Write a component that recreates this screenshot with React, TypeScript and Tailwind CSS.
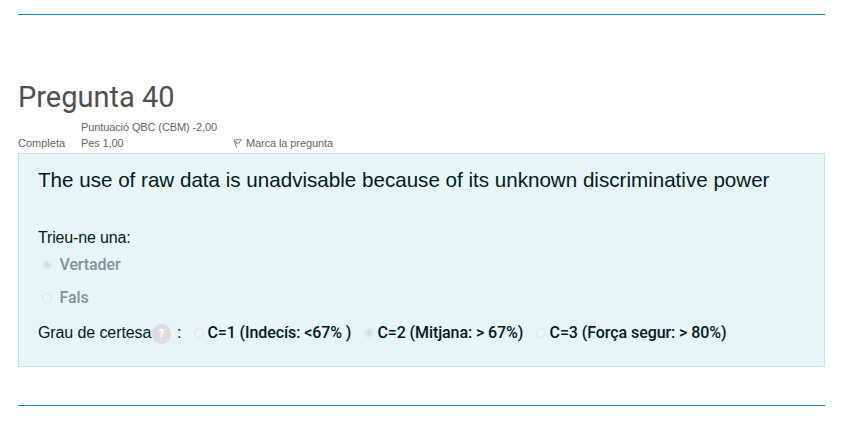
type ChoiceProps = { label: string; checked?: boolean; className: string };

function Radio({ checked }: { checked?: boolean }) {
  return (
    <span className="flex size-[10px] shrink-0 items-center justify-center rounded-full border border-[#dae4e4] bg-[#eaf5f5]">
      {checked && <span className="size-[6px] rounded-full bg-[#d5dddd]" />}
    </span>
  );
}

function Choice({ label, checked, className }: ChoiceProps) {
  return (
    <label className={`flex items-center font-['Roboto',sans-serif] font-medium whitespace-nowrap ${className}`}>
      <Radio checked={checked} />
      {label}
    </label>
  );
}

export default function App() {
  return (
    <main className="h-[437px] w-[855px] overflow-hidden bg-white pl-[18px] pr-[30px] pt-[14px] font-['Liberation_Sans',Arial,sans-serif]">
      <div className="h-px bg-[#1b81bc]" />
      <header className="mt-[62px] h-[76px] text-[11px] leading-4 text-[#666]">
        <h2 className="h-[42px] pt-[2px] font-['Roboto',sans-serif] text-[29px] leading-[36px] text-[#505050]">Pregunta 40</h2>
        <div className="flex h-[32px] items-end whitespace-nowrap">
          <span className="w-[63px]">Completa</span>
          <div className="w-[152px] tracking-[-0.11px]">
            <p>Puntuació QBC (CBM) -2,00</p>
            <p>Pes 1,00</p>
          </div>
          <span className="flex items-center gap-[3px] tracking-[-0.1px]">
            <svg className="mt-px h-[11px] w-[10px]" viewBox="0 0 10 11" fill="none" stroke="#777" strokeWidth="0.9">
              <path d="M1 1.8H8.6L6.6 3.6L6.6 5L3 5.5M1 1.8L3.6 10M2.2 3L3.8 5" />
            </svg>
            Marca la pregunta
          </span>
        </div>
      </header>
      <section className="h-[214px] border border-[#bee5eb] bg-[#e7f5f7] px-[19px] text-base text-[#001a1e]">
        <p className="h-[41px] pt-[12px] text-[20.6px] leading-[28px] whitespace-nowrap">The use of raw data is unadvisable because of its unknown discriminative power</p>
        <p className="mt-[31px] leading-6 tracking-[-0.15px]">Trieu-ne una:</p>
        <div className="-mt-[2px] flex flex-col">
          <Choice label="Vertader" checked className="h-[33px] gap-[7.5px] pl-[4px] tracking-[-0.1px] text-[#809496]" />
          <Choice label="Fals" className="h-[33px] gap-[7.5px] pl-[4px] tracking-[-0.1px] text-[#809496]" />
        </div>
        <div className="mt-[7px] flex h-6 items-center whitespace-nowrap">
          <span className="w-[114px] tracking-[-0.1px]">Grau de certesa</span>
          <span className="mt-[2px] flex h-[20px] w-[19px] items-center justify-center rounded-full bg-[#dddddd] pt-px font-['Roboto',sans-serif] text-[11px] font-black text-white">?</span>
          <span className="ml-[6px] w-[17px]">:</span>
          <Choice label="C=1 (Indecís: <67% )" className="w-[170px] gap-[3.5px] tracking-[-0.1px]" />
          <Choice label="C=2 (Mitjana: > 67%)" checked className="w-[172px] gap-[3.5px] tracking-[-0.1px]" />
          <Choice label="C=3 (Força segur: > 80%)" className="gap-[3.5px] tracking-[-0.07px]" />
        </div>
      </section>
      <div className="mt-[38px] h-px bg-[#1b81bc]" />
    </main>
  );
}
